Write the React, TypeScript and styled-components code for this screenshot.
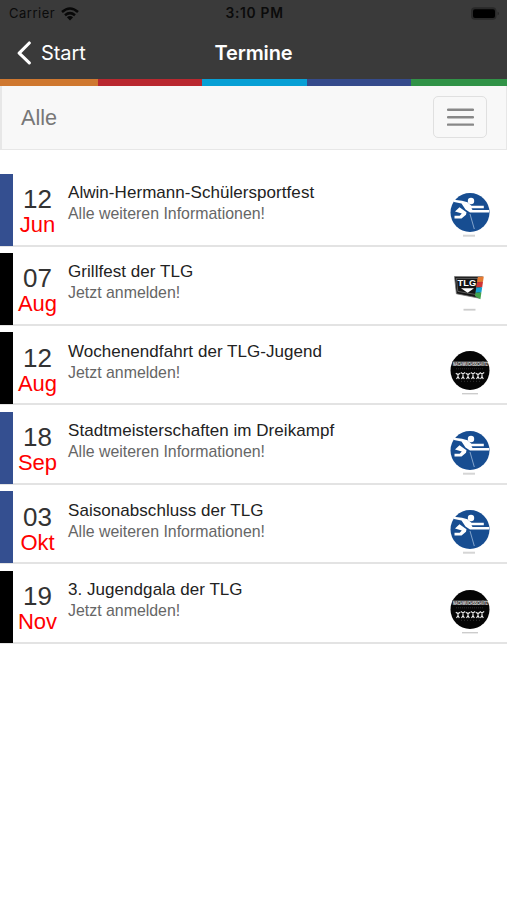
import React from "react";
import styled, { createGlobalStyle } from "styled-components";

const Global = createGlobalStyle`
  * { box-sizing: border-box; }
  body { margin: 0; background: #fff; font-family: "Liberation Sans", Arial, sans-serif; }
`;

const Screen = styled.main`
  width: 100%;
  min-height: 900px;
  background: #fff;
  overflow: hidden;
`;

const Header = styled.header`
  height: 79px;
  background: #3a3a3a;
`;

const StatusBar = styled.div`
  height: 27px;
  padding: 0 7px 0 9px;
  display: grid;
  grid-template-columns: 1fr auto 1fr;
  align-items: center;
  color: #0b0b0b;
  font: 500 13px/27px Inter, sans-serif;
`;

const Carrier = styled.div`
  display: flex;
  align-items: center;
  gap: 6px;
  font-weight: 400;
  letter-spacing: 0.5px;
`;

const Clock = styled.div`
  font-size: 13.8px;
  font-weight: 600;
  letter-spacing: 0.7px;
`;

const BatterySlot = styled.div`
  display: flex;
  justify-content: flex-end;
`;

const NavBar = styled.nav`
  height: 51px;
  padding: 0 16px;
  display: grid;
  grid-template-columns: 1fr auto 1fr;
  align-items: center;
  color: #fff;
`;

const Back = styled.a`
  display: flex;
  align-items: center;
  gap: 9px;
  font: 400 20px/50px Inter, sans-serif;
  letter-spacing: -0.05px;
`;

const Title = styled.h1`
  margin: 0;
  font: 600 20px/50px Inter, sans-serif;
  letter-spacing: -0.1px;
`;

const Stripes = styled.div`
  height: 7px;
  display: grid;
  grid-template-columns: 98px 103.5px 105.5px 103.5px 1fr;
`;

const Stripe = styled.span<{ $color: string }>`
  background: ${(p) => p.$color};
`;

const FilterBar = styled.section`
  height: 63.5px;
  padding: 0 19px;
  display: flex;
  align-items: center;
  justify-content: space-between;
  background: #f8f8f8;
  border: solid #e7e7e7;
  border-width: 0 1px 1px 2px;
`;

const FilterLabel = styled.span`
  padding-top: 1px;
  color: #777;
  font-size: 21.6px;
`;

const MenuButton = styled.button`
  width: 54px;
  height: 42px;
  padding: 0;
  display: flex;
  flex-direction: column;
  align-items: center;
  justify-content: center;
  gap: 5px;
  background: transparent;
  border: 1.5px solid #e0e0e0;
  border-radius: 5px;
`;

const BarsIcon = () => (
  <svg width="27" height="18" viewBox="0 0 27 18">
    <path d="M1 1.8h25M1 9.2h25M1 16.6h25" stroke="#888" strokeWidth="2.4" strokeLinecap="round" />
  </svg>
);

const List = styled.ul`
  margin: 24.2px 0 0;
  padding: 0;
  list-style: none;
  display: flex;
  flex-direction: column;
  gap: 6.5px;
`;

const Row = styled.li`
  height: 72.9px;
  display: grid;
  grid-template-columns: 13px 49px 1fr 74px;
  background: linear-gradient(#e3e3e3, #e3e3e3) bottom / 100% 2px no-repeat;
`;

const Marker = styled.span<{ $color: string }>`
  height: 72px;
  background: ${(p) => p.$color};
`;

const DateBlock = styled.time`
  padding-top: 11.4px;
  display: flex;
  flex-direction: column;
  align-items: center;
`;

const Day = styled.span`
  color: #333;
  font-size: 26px;
  line-height: 28px;
`;

const Month = styled.span`
  color: #f00;
  font-size: 22px;
  line-height: 24px;
`;

const Details = styled.div`
  padding: 8.4px 0 0 6px;
`;

const EventName = styled.div`
  color: #222;
  font-size: 17px;
  line-height: 21px;
  letter-spacing: 0.05px;
  white-space: nowrap;
`;

const Note = styled.div`
  color: #666;
  font-size: 15.9px;
  line-height: 21px;
`;

const LogoSlot = styled.div`
  padding: 18px 0 0 16px;
`;

const WifiIcon = () => (
  <svg width="18" height="14" viewBox="0 0 18 14" fill="none" stroke="#080808" strokeWidth="2.5">
    <path d="M1 5Q9-2 17 5M4 8.2Q9 4 14 8.2" />
    <path d="M9 13.4 5.9 10.3Q9 7.8 12.1 10.3Z" fill="#080808" stroke="none" />
  </svg>
);

const BatteryIcon = () => (
  <svg width="30" height="14" viewBox="0 0 30 14">
    <rect x="1" y=".3" width="25.5" height="12.4" rx="3.8" fill="#292929" />
    <rect x="3" y="2.2" width="22" height="8.9" rx="2" fill="#000" />
    <path d="M27.7 4.5Q29.8 6.5 27.7 8.5Z" fill="#202020" />
  </svg>
);

const BackIcon = () => (
  <svg width="16" height="24" viewBox="0 0 16 24">
    <path d="M13.3 2 3.2 12.2l10.1 9.7" fill="none" stroke="#fff" strokeWidth="3.1" strokeLinecap="round" strokeLinejoin="round" />
  </svg>
);

const ShooterLogo = () => (
  <svg width="42" height="48" viewBox="0 0 42 48">
    <circle cx="21" cy="20.5" r="19.5" fill="#174d91" />
    <path d="M5 7.8 13 8.8 18.5 10.2 22.5 13.8H34.8V16.2H22.5L23.5 18H40V20.4H21L16.5 17.5 12.5 11.5 5 10Z" fill="#fff" />
    <path d="M10.5 15.3 17.5 20.2 17 22.8 12.5 26.5H5.5V23.8H10.7L12.8 21.6 6 19.4Z" fill="#fff" />
    <path d="m21 22 4.3 15" fill="none" strokeWidth=".8" stroke="#9db9d9" />
    <circle cx="22" cy="9" r="3.2" fill="#fff" />
    <path d="M14 43.7h12" stroke="#d5d5d5" strokeWidth="2" />
  </svg>
);

const MicroText = styled.text`
  font-family: "Liberation Sans", Arial, sans-serif;
  font-weight: 700;
`;

const ClubLogo = () => (
  <svg width="42" height="48" viewBox="0 0 42 48">
    <path d="m5.5 5.5 28 .2-3.1 21.5-23-4.4Z" fill="#151515" stroke="#777" strokeWidth=".8" />
    <path d="m7.5 7.3 21.5.2-2.2 16-18-3.1Z" fill="none" stroke="#888" strokeWidth=".6" />
    <MicroText x="8.6" y="15.4" fontSize="9.6" fill="#fff" textLength="18.5" lengthAdjust="spacingAndGlyphs">TLG</MicroText>
    <path d="M12 17.3h13l-6.3 4.4Z" fill="#fff" />
    <path d="m28.8 6 6-.4-.8 5.2-5.9.4Z" fill="#e57a31" />
    <path d="m28.1 11.2 5.9-.4-.8 5.4-5.9.4Z" fill="#cf3434" />
    <path d="m27.3 16.6 5.9-.4-.8 5.3-5.8.3Z" fill="#179fcf" />
    <path d="m26.6 21.8 5.8-.3-1 6.8-5.6-3.2Z" fill="#42a34c" />
    <path d="M14.5 38.7h12" stroke="#ccc" strokeWidth="1.8" />
  </svg>
);

const YouthLogo = () => (
  <svg width="42" height="48" viewBox="0 0 42 48">
    <circle cx="21" cy="20.5" r="19.5" fill="#050505" />
    <path d="M3.5 11h35v5h-35Z" fill="#3c3c3c" />
    <g transform="translate(4 15.6) scale(.62 1)">
      <MicroText fontSize="5.3" fill="#ddd">NACHWUCHSSCHÜTZ</MicroText>
    </g>
    <path d="M7 18.8h28" stroke="#555" strokeWidth=".5" strokeDasharray="1 1" />
    <g fill="none" stroke="#eee" strokeWidth="1.1">
      {[9, 14, 19, 24, 29, 33].map((x, i) => (
        <path key={x} d={`M${x - 2.2} ${i % 2 ? 22.5 : 23.2}l2.2 1.4 2.2-1.4M${x} 23.5v3l-1.5 2.5M${x} 26.5l1.3 2.5`} />
      ))}
    </g>
    <path d="M12 31.3h20" stroke="#555" strokeWidth=".6" strokeDasharray="1 2" />
    <path d="M13 43.7h16" stroke="#ccc" strokeWidth="1.4" />
  </svg>
);

const logos = { shooter: ShooterLogo, club: ClubLogo, youth: YouthLogo };

const events: { day: string; month: string; name: string; note: string; color: string; logo: keyof typeof logos }[] = [
  { day: "12", month: "Jun", name: "Alwin-Hermann-Schülersportfest", note: "Alle weiteren Informationen!", color: "#344f90", logo: "shooter" },
  { day: "07", month: "Aug", name: "Grillfest der TLG", note: "Jetzt anmelden!", color: "#000", logo: "club" },
  { day: "12", month: "Aug", name: "Wochenendfahrt der TLG-Jugend", note: "Jetzt anmelden!", color: "#000", logo: "youth" },
  { day: "18", month: "Sep", name: "Stadtmeisterschaften im Dreikampf", note: "Alle weiteren Informationen!", color: "#344f90", logo: "shooter" },
  { day: "03", month: "Okt", name: "Saisonabschluss der TLG", note: "Alle weiteren Informationen!", color: "#344f90", logo: "shooter" },
  { day: "19", month: "Nov", name: "3. Jugendgala der TLG", note: "Jetzt anmelden!", color: "#000", logo: "youth" },
];

const stripeColors = ["#cf7830", "#b9282f", "#08a0d5", "#354b8c", "#319347"];

export default function App() {
  return (
    <Screen>
      <Global />
      <Header>
        <StatusBar>
          <Carrier>Carrier <WifiIcon /></Carrier>
          <Clock>3:10 PM</Clock>
          <BatterySlot><BatteryIcon /></BatterySlot>
        </StatusBar>
        <NavBar>
          <Back><BackIcon />Start</Back>
          <Title>Termine</Title>
        </NavBar>
      </Header>
      <Stripes>{stripeColors.map((c) => <Stripe key={c} $color={c} />)}</Stripes>
      <FilterBar>
        <FilterLabel>Alle</FilterLabel>
        <MenuButton aria-label="Menü"><BarsIcon /></MenuButton>
      </FilterBar>
      <List>
        {events.map((e) => {
          const Logo = logos[e.logo];
          return (
            <Row key={e.name}>
              <Marker $color={e.color} />
              <DateBlock><Day>{e.day}</Day><Month>{e.month}</Month></DateBlock>
              <Details><EventName>{e.name}</EventName><Note>{e.note}</Note></Details>
              <LogoSlot><Logo /></LogoSlot>
            </Row>
          );
        })}
      </List>
    </Screen>
  );
}
